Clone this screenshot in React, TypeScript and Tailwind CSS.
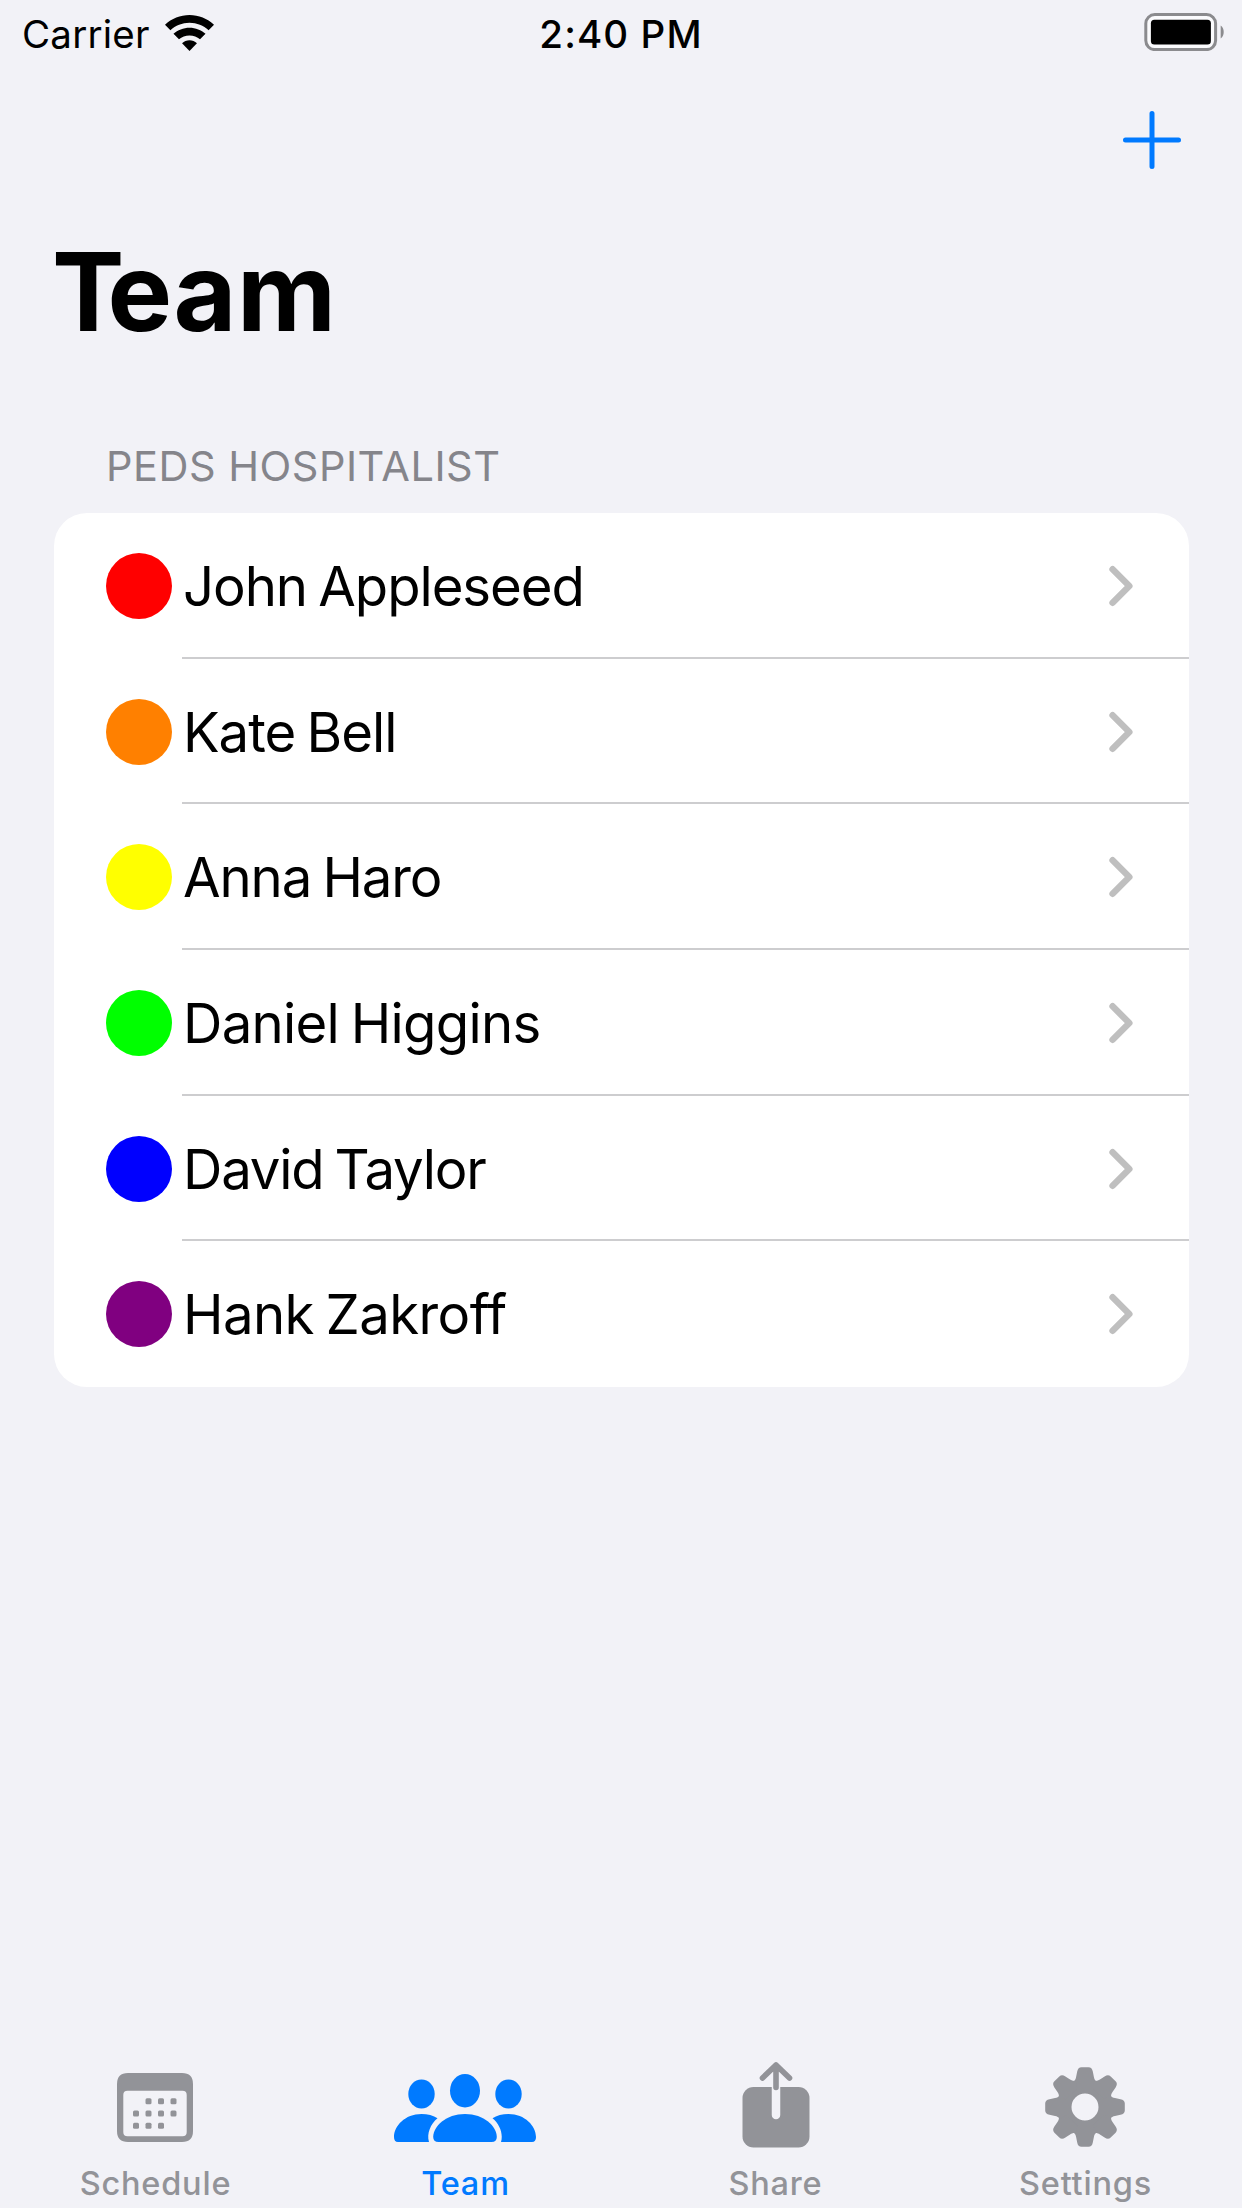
import type { ReactNode } from "react";

type Member = {
  name: string;
  dotClass: string;
  nameClass: string;
};

type Tab = {
  label: string;
  icon: ReactNode;
  active?: boolean;
};

const members: Member[] = [
  { name: "John Appleseed", dotClass: "bg-[#ff0000]", nameClass: "tracking-[-1.05px]" },
  { name: "Kate Bell", dotClass: "bg-[#ff8000]", nameClass: "tracking-[-1px]" },
  { name: "Anna Haro", dotClass: "bg-[#ffff00]", nameClass: "tracking-[-1.1px]" },
  { name: "Daniel Higgins", dotClass: "bg-[#00ff00]", nameClass: "tracking-[-0.7px]" },
  { name: "David Taylor", dotClass: "bg-[#0000ff]", nameClass: "tracking-[-1.2px]" },
  { name: "Hank Zakroff", dotClass: "bg-[#800080]", nameClass: "tracking-[-0.6px]" },
];

function WifiIcon() {
  return (
    <svg className="h-9 w-[49px]" viewBox="0 0 48 36" preserveAspectRatio="none">
      <path d="M24 0C33 0 41.500 3.500 48 9.700L42.700 15.200C37.700 10.600 31.200 7.800 24 7.800S10.300 10.600 5.300 15.200L0 9.700C6.500 3.500 15 0 24 0Z" />
      <path d="M24 12.700C30 12.700 35.500 15 39.700 18.800L34.300 24.200C31.500 21.800 28 20.400 24 20.400S16.500 21.800 13.700 24.200L8.300 18.800C12.500 15 18 12.700 24 12.700Z" />
      <path d="M24 25.300C26.800 25.300 29.300 26.300 31.300 28.200L24 36L16.700 28.200C18.700 26.300 21.200 25.300 24 25.300Z" />
    </svg>
  );
}

function BatteryIcon() {
  return (
    <svg className="h-[38px] w-20" viewBox="0 0 80 38">
      <rect x="1.800" y="1.600" width="69.800" height="35" rx="9" fill="#fbfbfd" stroke="#8b8b8e" strokeWidth="3" />
      <rect x="6.900" y="6.700" width="60" height="24.800" rx="3.500" />
      <path d="M76.700 12.500C80.700 15 80.700 23 76.700 25.500Z" fill="#8b8b8e" />
    </svg>
  );
}

function PlusIcon() {
  return (
    <svg className="h-[60px] w-[60px]" viewBox="0 0 60 60" fill="none" stroke="#007aff" strokeWidth="5" strokeLinecap="round">
      <path d="M30 3.500V56.500M3.500 30H56.500" />
    </svg>
  );
}

function ChevronIcon() {
  return (
    <svg className="h-[42px] w-[26px]" viewBox="0 0 26 42" fill="none" stroke="#bfbfbf" strokeWidth="6.500" strokeLinecap="round" strokeLinejoin="round">
      <path d="M4.600 4.300L21.300 21L4.600 37.700" />
    </svg>
  );
}

const calendarDots = [
  [31.500, 28.300], [44, 28.300], [56.500, 28.300],
  [19, 40.500], [31.500, 40.500], [44, 40.500], [56.500, 40.500],
  [19, 52.700], [31.500, 52.700], [44, 52.700],
];

function CalendarIcon() {
  return (
    <svg className="h-[69px] w-[76px]" viewBox="0 0 76 69" fill="currentColor">
      <path
        fillRule="evenodd"
        d="M11 0H65Q76 0 76 11V58Q76 69 65 69H11Q0 69 0 58V11Q0 0 11 0ZM10.500 17.800Q6.300 17.800 6.300 22V59Q6.300 63.300 10.500 63.300H65.500Q69.700 63.300 69.700 59V22Q69.700 17.800 65.500 17.800Z"
      />
      {calendarDots.map(([x, y]) => (
        <rect key={`${x}-${y}`} x={x - 3} y={y - 3} width="6" height="6" rx="1.500" />
      ))}
    </svg>
  );
}

function TeamIcon() {
  return (
    <svg className="mt-[2px] h-[68px] w-[142px]" viewBox="0 0 142 68" fill="currentColor">
      <ellipse cx="71" cy="16.700" rx="15" ry="16.700" />
      <ellipse cx="27.500" cy="20" rx="13.200" ry="14.400" />
      <ellipse cx="114.500" cy="20" rx="13.200" ry="14.400" />
      <path d="M71 40C90 40 102.800 52.500 102.800 63Q102.800 68 97.500 68H44.500Q39.200 68 39.200 63C39.200 52.500 52 40 71 40Z" />
      <path d="M27.500 40C33.500 40 39.500 41.500 43.500 44.200C36.500 50 32.500 59.500 35 68H4Q0 68 0 63C0 52 11 40 27.500 40Z" />
      <path d="M114.500 40C108.500 40 102.500 41.500 98.500 44.200C105.500 50 109.500 59.500 107 68H138Q142 68 142 63C142 52 131 40 114.500 40Z" />
    </svg>
  );
}

function ShareIcon() {
  return (
    <svg className="mb-[5px] ml-px h-[86px] w-[68px]" viewBox="0 0 68 86" fill="none" strokeLinecap="round" strokeLinejoin="round">
      <rect x="0.500" y="25" width="67" height="60.500" rx="11" fill="currentColor" />
      <path d="M34 24V53" stroke="#f2f2f7" strokeWidth="8.500" />
      <path d="M34 3V25.500M20.500 16L34 3L47.500 16" stroke="currentColor" strokeWidth="5.600" />
    </svg>
  );
}

const gearAngles = [0, 45, 90, 135, 180, 225, 270, 315];

function GearIcon() {
  return (
    <svg className="h-20 w-20" viewBox="-40 -40 80 80" fill="currentColor">
      <circle r="20.500" fill="none" stroke="currentColor" strokeWidth="14" />
      {gearAngles.map((angle) => (
        <path
          key={angle}
          transform={`rotate(${angle})`}
          d="M-12 -25C-10 -26.500 -9.300 -28 -8.900 -30L-7.800 -35.500Q-7 -39.800 -3.500 -39.800H3.500Q7 -39.800 7.800 -35.500L8.900 -30C9.300 -28 10 -26.500 12 -25L8 -19H-8Z"
        />
      ))}
    </svg>
  );
}

const tabs: Tab[] = [
  { label: "Schedule", icon: <CalendarIcon /> },
  { label: "Team", icon: <TeamIcon />, active: true },
  { label: "Share", icon: <ShareIcon /> },
  { label: "Settings", icon: <GearIcon /> },
];

function StatusBar() {
  return (
    <header className="grid h-[66px] grid-cols-3 items-start text-[38.5px] leading-[46px]">
      <div className="flex items-start pl-[22px] pt-[11px]">
        <span className="w-[143px] tracking-[0.2px]">Carrier</span>
        <div className="pt-1">
          <WifiIcon />
        </div>
      </div>
      <div className="pt-[11px] text-center font-medium tracking-[1.1px]">2:40 PM</div>
      <div className="flex justify-end pr-[18px] pt-[13px]">
        <BatteryIcon />
      </div>
    </header>
  );
}

function MemberRow({ member, last }: { member: Member; last: boolean }) {
  return (
    <li className="flex h-[145.700px] items-center pl-[52px]">
      <span className={`size-[66px] shrink-0 rounded-full ${member.dotClass}`} />
      <div
        className={`ml-[10px] flex h-full flex-1 items-center justify-between pl-px pr-[55px] ${
          last ? "" : "border-b-2 border-[#cdcdcf] pt-[2px]"
        }`}
      >
        <span className={`text-[54.500px] leading-[66px] [word-spacing:-3px] ${member.nameClass}`}>{member.name}</span>
        <ChevronIcon />
      </div>
    </li>
  );
}

export default function App() {
  return (
    <div className="flex h-[2208px] w-[1242px] flex-col overflow-hidden bg-[#f2f2f7] font-['Inter',sans-serif] text-black">
      <StatusBar />
      <div className="flex h-[150px] justify-end pr-[60px] pt-11">
        <button type="button" aria-label="Add member" className="size-[60px]">
          <PlusIcon />
        </button>
      </div>
      <main className="flex-1 px-[54px]">
        <h1 className="-ml-[2px] h-[221px] pt-[10px] text-[108.500px] leading-[132px] font-bold tracking-[0.5px]">
          <span className="tracking-[-17px]">T</span>eam
        </h1>
        <h2 className="h-[76px] pl-[52px] pt-[4px] text-[41.500px] leading-[50px] tracking-[0.500px] text-[#85858b]">
          PEDS HOSPITALIST
        </h2>
        <ul className="h-[874px] w-[1135px] overflow-hidden rounded-[33px] bg-white">
          {members.map((member, index) => (
            <MemberRow key={member.name} member={member} last={index === members.length - 1} />
          ))}
        </ul>
      </main>
      <nav className="grid h-[154px] grid-cols-4 pr-[2px]">
        {tabs.map((tab) => (
          <a
            key={tab.label}
            className={`flex flex-col items-center ${tab.active ? "text-[#007aff]" : "text-[#929398]"}`}
          >
            <div className="flex h-[106px] items-center">{tab.icon}</div>
            <span className="pl-px pt-1 text-[32.500px] leading-10 font-medium tracking-[0.8px]">{tab.label}</span>
          </a>
        ))}
      </nav>
    </div>
  );
}
